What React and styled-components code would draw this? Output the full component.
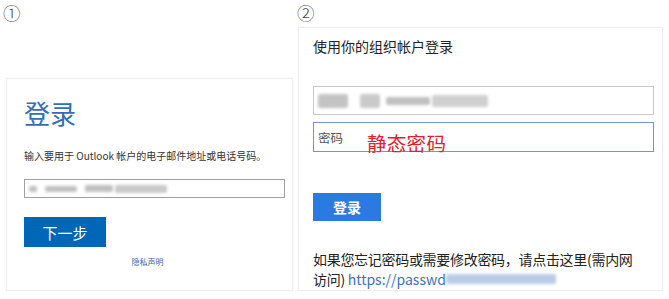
import styled, { createGlobalStyle } from 'styled-components'

const Global = createGlobalStyle`
  html, body {
    margin: 0;
    background: #fff;
  }
  body {
    font-family: "Noto Sans CJK SC", "Noto Sans", sans-serif;
    color: #222;
  }
`

const Page = styled.div`
  width: 669px;
  height: 299px;
  display: flex;
  padding: 0 6px 8px 3px;
  box-sizing: border-box;
  gap: 4px;
`

const Column = styled.div`
  width: ${props => props.w}px;
  display: flex;
  flex-direction: column;
`

const Label = styled.div`
  font-family: "Noto Sans CJK SC", sans-serif;
  font-size: 17.5px;
  font-weight: 300;
  line-height: normal;
  color: #444;
`

const Card = styled.div`
  margin-top: auto;
  margin-left: ${props => props.ml || 0}px;
  height: ${props => props.h}px;
  box-sizing: border-box;
  border: 1px solid #eeeeee;
  box-shadow: 0 0 2px rgba(0, 0, 0, 0.05);
  display: flex;
  flex-direction: column;
  padding: ${props => props.pad};
`

const Title = styled.h1`
  margin: 0;
  font-size: 26px;
  font-weight: 400;
  line-height: 32px;
  color: #2f6fb6;
`

const Desc = styled.p`
  margin: 20px 0 0;
  font-size: 10px;
  line-height: 14px;
  color: #333;
`

const Field = styled.div`
  height: ${props => props.h}px;
  box-sizing: border-box;
  border: 1px solid ${props => props.border};
  display: flex;
  align-items: center;
  padding-left: 4px;
  margin-top: ${props => props.mt}px;
  margin-right: ${props => props.mr || 0}px;
  position: relative;
  background: #fff;
`

const Smudge = styled.div`
  width: ${props => props.w}px;
  height: ${props => props.h}px;
  background: ${props => props.bg || '#b0b0b0'};
  filter: blur(1.5px);
  opacity: 0.8;
  border-radius: 2px;
  margin-left: ${props => props.ml || 0}px;
`

const Blur = styled.div`
  display: flex;
  align-items: center;
`

const PrimaryButton = styled.div`
  width: ${props => props.w}px;
  height: ${props => props.h}px;
  margin-top: ${props => props.mt}px;
  background: ${props => props.bg};
  color: #fff;
  font-size: ${props => props.fs}px;
  font-weight: ${props => props.fw || 400};
  display: flex;
  align-items: center;
  justify-content: center;
`

const Privacy = styled.div`
  margin-top: 9px;
  text-align: center;
  font-size: 8px;
  line-height: 12px;
  color: #3f63a0;
  padding-right: 14px;
`

const Heading = styled.div`
  font-size: 14px;
  line-height: 18px;
  color: #222;
`

const Placeholder = styled.span`
  font-size: 12.5px;
  color: #555;
`

const Annotation = styled.span`
  position: absolute;
  left: 53px;
  top: 8px;
  font-size: 19.5px;
  line-height: 24px;
  color: #e4202b;
  font-family: "Noto Sans CJK SC", serif;
  letter-spacing: 0.3px;
`

const Help = styled.p`
  margin: 28px 0 0;
  font-size: 14px;
  line-height: 20px;
  letter-spacing: -0.3px;
  color: #222;
`

const Link = styled.span`
  color: #3a72c4;
  display: inline-flex;
  align-items: center;
  vertical-align: top;
  letter-spacing: 0;
`

export default function App() {
  return (
    <>
      <Global />
      <Page>
        <Column w={290}>
          <Label>①</Label>
          <Card ml={3} h={213} pad="18px 7px 0 17px">
            <Title>登录</Title>
            <Desc>输入要用于 Outlook 帐户的电子邮件地址或电话号码。</Desc>
            <Field h={19} border="#a0a0a0" mt={16}>
              <Blur>
                <Smudge w={8} h={6} />
                <Smudge w={32} h={6} ml={8} />
                <Smudge w={28} h={7} ml={8} />
                <Smudge w={52} h={8} ml={2} bg="#bcbcbc" />
              </Blur>
            </Field>
            <PrimaryButton w={82} h={30} mt={19} bg="#0067b8" fs={15}>下一步</PrimaryButton>
            <Privacy>隐私声明</Privacy>
          </Card>
        </Column>
        <Column w={366}>
          <Label>②</Label>
          <Card ml={1} h={264} pad="9px 0 0 14px">
            <Heading>使用你的组织帐户登录</Heading>
            <Field h={29} border="#c8c8c8" mt={31} mr={8}>
              <Blur>
                <Smudge w={30} h={14} bg="#b5b5b5" />
                <Smudge w={20} h={14} ml={12} bg="#bdbdbd" />
                <Smudge w={44} h={8} ml={6} />
                <Smudge w={56} h={12} ml={2} bg="#c4c4c4" />
              </Blur>
            </Field>
            <Field h={30} border="#7c8ed8" mt={7} mr={8}>
              <Placeholder>密码</Placeholder>
              <Annotation>静态密码</Annotation>
            </Field>
            <PrimaryButton w={68} h={28} mt={41} bg="#2a7ae2" fs={14} fw={700}>登录</PrimaryButton>
            <Help>
              如果您忘记密码或需要修改密码，请点击这里(需内网
              <br />
              访问) <Link>https://passwd<Smudge w={110} h={10} bg="#a9bfe0" /></Link>
            </Help>
          </Card>
        </Column>
      </Page>
    </>
  )
}
